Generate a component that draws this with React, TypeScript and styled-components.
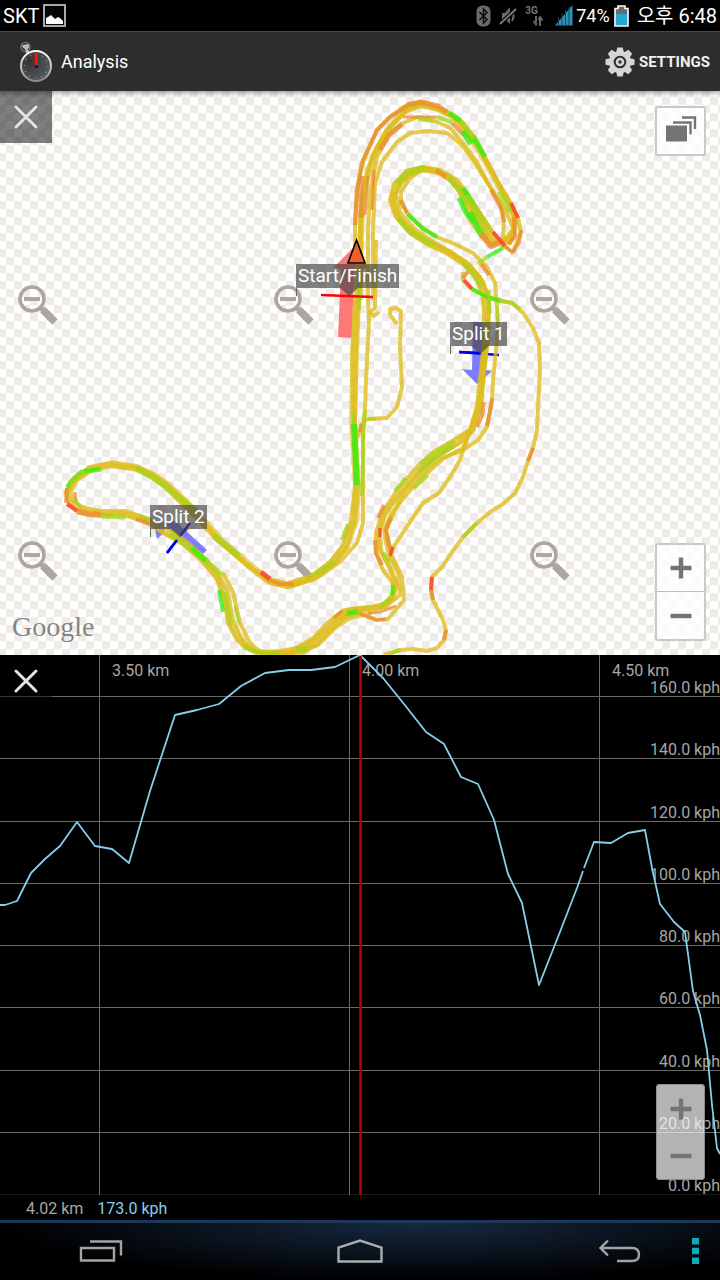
import React from "react";
import styled, { createGlobalStyle } from "styled-components";

const GlobalStyle = createGlobalStyle`
  *, *::before, *::after { box-sizing: border-box; }
  body { margin: 0; background: #000; font-family: Roboto, "Noto Sans CJK KR", sans-serif; }
  button { font: inherit; color: inherit; border: 0; padding: 0; background: none; cursor: pointer; }
  svg { display: block; }
`;

const Screen = styled.div`
  display: flex;
  flex-direction: column;
  min-height: 100vh;
  background: #000;
  overflow: hidden;
`;

const StatusBar = styled.div`
  display: flex;
  align-items: center;
  justify-content: space-between;
  height: 31px;
  padding: 0 3px;
  color: #fff;
  font-size: 20px;
  line-height: 30px;
`;

const StatusGroup = styled.div<{ $gap: number }>`
  display: flex;
  align-items: center;
  gap: ${(p) => p.$gap}px;
  white-space: nowrap;
`;

const Percent = styled.span`
  font-size: 18px;
  margin-right: 1px;
`;

const ActionBar = styled.header`
  position: relative;
  z-index: 2;
  display: flex;
  align-items: center;
  justify-content: space-between;
  height: 60px;
  padding: 0 10px 0 18px;
  background: #2d2d2d;
  border-top: 1px solid #484848;
  box-shadow: 0 1px 6px rgba(0, 0, 0, 0.5);
  color: #fff;
`;

const Brand = styled.div`
  display: flex;
  align-items: center;
  gap: 7px;
`;

const Title = styled.h1`
  margin: 0;
  font-size: 18px;
  line-height: 24px;
  font-weight: 400;
`;

const SettingsButton = styled.button`
  display: flex;
  align-items: center;
  gap: 4px;
  font-size: 15px;
  line-height: 24px;
  font-weight: 700;
  color: #f0f0f0;
`;

const MapPanel = styled.section`
  position: relative;
  aspect-ratio: 720 / 564;
  overflow: hidden;
  background: repeating-conic-gradient(#fff 0 25%, #efebe6 0 50%) 6px 6px / 16px 16px;
`;

const Canvas = styled.svg`
  position: absolute;
  inset: 0;
  width: 100%;
  height: 100%;
`;

const CloseButton = styled.button<{ $fill: string }>`
  position: absolute;
  top: 0;
  left: 0;
  display: grid;
  place-items: center;
  width: 52px;
  height: 52px;
  background: ${(p) => p.$fill};
`;

const LayersButton = styled.button`
  position: absolute;
  top: 15px;
  right: 14px;
  display: grid;
  place-items: center;
  width: 51px;
  height: 50px;
  border: 2px solid #c9c9c9;
  border-radius: 3px;
  background: rgba(255, 255, 255, 0.8);
`;

const ZoomStack = styled.div<{ $dim?: boolean }>`
  position: absolute;
  right: ${(p) => (p.$dim ? 15 : 14)}px;
  bottom: ${(p) => (p.$dim ? 15 : 14)}px;
  display: flex;
  flex-direction: column;
  width: ${(p) => (p.$dim ? 49 : 51)}px;
  border: ${(p) => (p.$dim ? "1px solid #8d8d8d" : "2px solid #c9c9c9")};
  border-radius: 3px;
  background: rgba(255, 255, 255, ${(p) => (p.$dim ? 0.7 : 0.8)});
`;

const ZoomButton = styled.button<{ $divider?: boolean }>`
  display: grid;
  place-items: center;
  height: 47px;
  ${(p) => p.$divider && "border-bottom: 1px solid #bdbdbd;"}
`;

const Pin = styled.span<{ $x: number; $y: number }>`
  position: absolute;
  left: ${(p) => (p.$x / 720) * 100}%;
  top: ${(p) => (p.$y / 564) * 100}%;
  padding: 0 2px;
  font-size: 19px;
  line-height: 24px;
  color: #fff;
  background: rgba(70, 70, 70, 0.68);
  white-space: nowrap;
`;

const Attribution = styled.span`
  position: absolute;
  left: 12px;
  bottom: 12px;
  font-family: "Liberation Serif", serif;
  font-size: 28px;
  line-height: 32px;
  color: #858585;
`;

const ChartPanel = styled.section`
  position: relative;
  aspect-ratio: 720 / 540;
  overflow: hidden;
  font-size: 16px;
  line-height: 20px;
  color: #a6a6a6;
`;

const SpeedRows = styled.div`
  display: grid;
  grid-template-rows: 42fr repeat(8, 62fr);
  height: 100%;
  text-align: right;
`;

const SpeedRow = styled.div`
  display: flex;
  align-items: flex-end;
  justify-content: flex-end;
  min-height: 0;
  line-height: 16px;
  border-bottom: 1px solid #6a6a6a;
  &:last-child { border-bottom-color: #1c1c1c; }
`;

const DistanceColumns = styled.div`
  position: absolute;
  inset: 0;
  display: grid;
  grid-template-columns: 100fr 250fr 250fr 120fr;
`;

const DistanceColumn = styled.div`
  padding: 6px 0 0 12px;
  white-space: nowrap;
  &:not(:last-child) { border-right: 1px solid #6a6a6a; }
`;

const Readout = styled.div`
  display: flex;
  gap: 14px;
  height: 25px;
  padding: 2px 26px;
  font-size: 16px;
  line-height: 24px;
  color: #a6a6a6;
`;

const Speed = styled.span`
  color: #87ceeb;
`;

const NavBar = styled.nav`
  display: grid;
  grid-template-columns: 202fr 316fr 202fr;
  height: 60px;
  padding-bottom: 2px;
  border-top: 3px solid #1b3759;
  background: radial-gradient(ellipse 58% 58px at 58% 0, #17293f 0%, #0b1420 50%, #000 100%);
`;

const NavButton = styled.button`
  display: grid;
  place-items: center;
`;

const NavEnd = styled.div`
  display: flex;
  justify-content: flex-end;
  gap: 51px;
  padding-right: 21px;
`;

type Pt = [number, number];
const line = (s: string) => "M" + s.trim().split(/\s+/).join("L");

const Y = "#debd1e";
const L = "#a3d41c";
const G = "#2cf010";
const O = "#ea8a30";
const R = "#ff3030";

/* The racing line shared by most laps, where the strands merge into a band. */
const bands: [number, string][] = [
  [8, "357,300 355,353 353,420 357,487 355,520 346,546 333,562 313,578 287,585 268,580 250,566 220,540 204,522 187,504 167,485 152,475 137,468 110,464"],
  [5, "110,464 90,468 74,480 67,492 70,503 82,510 100,513 123,513 147,520 163,531 183,543 203,560"],
  [6, "203,560 218,578 225,600 231,625 243,645 258,653 290,652 313,641 328,627 343,612 360,609 380,607"],
  [6, "360,300 361,230 364,190 374,155 387,131 405,109 421,103 437,108 453,117 464,129 480,152 497,183 511,207 516,224 511,238 500,243"],
  [7, "488,238 474,216 462,192 449,177 436,171 422,169 407,174 395,187 392,201 398,217 410,231 428,243 449,253 465,264 478,277 485,293 487,320 485,350 482,380 479,407 472,430 456,444"],
  [5, "456,444 436,456 420,469 402,489 386,511 379,530"],
  [5, "379,530 381,551 391,570 396,586 392,600 380,607"],
];

/* Recorded laps, one poly-line per pass over the circuit. */
const laps: string[] = [
  "355,260 355,225 357,190 363,162 377,130 390,117 407,105 421,102 437,107 452,114 463,123 475,138 485,157 497,180 509,200 518,218 521,232 513,252 503,246 493,233 480,213 467,193 457,180 440,170 422,167 407,171 394,184 390,200 396,217 409,232 427,244 447,253 463,263 475,277 482,293 484,310 484,340 480,380 477,407 470,430 452,441 433,452 417,467 397,490 382,513 376,533 376,553 383,570 392,582 394,592 386,603 372,607 350,609 342,611 327,623 313,638 297,648 275,652 253,651 237,640 228,623 224,597 217,579 203,562 183,544 163,533 147,522 123,515 100,515 80,513 69,504 66,492 73,479 90,467 110,463 137,467 153,474 168,485 187,503 204,522 220,540 250,567 270,583 287,587 313,579 333,565 347,547 355,520 358,487 354,440 353,420 352,353 356,287 358,250",
  "361,260 361,230 362,203 367,170 377,147 390,127 407,110 422,105 437,109 453,117 464,127 476,144 487,162 503,192 514,213 513,230 503,241 492,245 482,237 470,220 460,193 450,178 437,172 422,169 409,175 398,187 393,200 399,217 411,230 428,241 449,251 466,262 480,277 487,293 489,310 488,340 483,380 481,407 473,430 458,444 436,457 420,471 400,494 385,515 379,533 380,550 390,568 397,585 391,600 380,608 358,611 343,615 328,628 314,641 298,653 270,656 250,649 240,636 232,616 228,592 220,577 207,560 187,542 168,529 149,519 125,511 100,511 82,507 73,501 71,491 77,480 92,470 112,466 137,469 151,477 165,487 183,505 200,522 218,541 247,565 270,580 287,584 311,576 330,562 343,545 351,520 355,487 356,440 355,420 356,353 359,287 361,240",
  "368,300 368,230 370,193 377,157 388,135 403,123 418,117 433,120 450,128 463,143 477,162 487,182 500,203 504,220 503,238 494,243 486,235 475,217 466,200 453,183 438,171 424,168 410,178 401,192 401,203 410,217 423,228 437,237 457,245 473,253 487,267 495,283 497,307 498,330 493,380 492,400 487,427 478,440 463,450 440,459 424,472 404,492 392,517 386,530 391,553 402,577 404,600 388,619 377,620 358,613 344,618 330,631 316,645 300,655",
  "373,300 373,230 375,183 382,162 397,142 410,133 428,131 447,133 462,145 475,163 489,185 505,210 514,230 510,243 497,240 486,222 474,205 462,190",
  "359,300 360,215 365,185 373,155 386,131 404,113 420,106 436,109 452,116 466,130 480,150 494,176 508,202 516,222 509,238 496,242 486,230 473,210 464,192 450,178 433,170 415,171 402,180 396,194 400,212 414,228 432,241 452,253 470,265 483,282 489,300 487,330 484,365 481,395 473,425 463,448 444,458 424,476 407,494 391,514 384,531 388,552 398,574 400,595 385,607 358,609 341,619",
  "368,300 369,320 366,380 365,410 363,437 363,497 363,523 357,543 340,562 318,577 290,587",
  "376,240 375,308 370,312 374,316 379,312",
  "397,324 390,315 390,309 396,308 401,311 400,347 402,387 397,407 387,418 367,419 361,425 358,437",
  "223,573 233,592 240,623 250,643 262,653 290,653 318,645 335,628 350,618 372,613",
  "463,272 463,280 472,289 487,297 512,303 523,313 533,328 539,343 540,370 538,407 537,430 533,448 528,461 523,477 515,493 503,504 490,512 477,523 463,537 452,552 442,567 432,577 431,590 433,600 443,620 446,630 444,640 437,648 427,651 413,649 400,650 384,655",
  "470,430 460,460 450,477 439,493 423,503 410,522 394,546 390,557",
];

/* Acceleration (green) and braking (orange, red) stretches painted over the laps. */
const stretches: [string, number, string][] = [
  [O, 4, "355,225 357,190 362,162"],
  [O, 5, "361,218 361,190 362,176"],
  [O, 3, "365,215 368,176"],
  [O, 3, "372,210 374,170"],
  [O, 4, "362,162 377,130 390,117 407,106"],
  [O, 5, "380,150 389,135 402,124"],
  [O, 5, "407,105 421,102 438,106 447,112"],
  [O, 3, "403,117 437,117"],
  [O, 4, "452,123 466,137"],
  [L, 4, "418,119 433,121"],
  [L, 4, "437,117 452,122"],
  [G, 5, "449,113 461,121"],
  [G, 6, "463,131 471,144"],
  [G, 5, "473,136 485,157"],
  [L, 4, "461,121 474,138"],
  [O, 4, "491,190 501,208 504,222"],
  [L, 5, "499,192 510,212"],
  [R, 4, "511,203 518,218"],
  [O, 4, "521,230 519,242 513,252"],
  [O, 4, "514,217 515,236 509,244"],
  [L, 5, "449,178 461,192 468,205"],
  [G, 5, "459,198 466,213 474,222"],
  [G, 5, "463,188 474,205"],
  [L, 5, "474,205 481,218 488,229"],
  [G, 6, "470,212 481,234"],
  [L, 5, "467,195 480,217"],
  [O, 6, "481,234 491,246 500,243"],
  [R, 4, "493,232 505,246"],
  [O, 3, "505,246 513,253"],
  [G, 4, "503,248 487,257"],
  [L, 4, "487,257 478,264"],
  [O, 4, "468,272 463,278"],
  [R, 4, "464,280 472,289"],
  [G, 4, "472,289 487,297 500,301"],
  [L, 4, "500,301 512,303 520,309"],
  [L, 6, "397,184 407,172 425,168"],
  [O, 4, "436,170 446,177"],
  [O, 4, "401,200 407,213"],
  [G, 4, "408,214 423,229 437,237"],
  [L, 5, "398,218 411,233 434,245"],
  [L, 4, "462,262 474,275 481,287"],
  [O, 4, "481,264 489,275"],
  [L, 3, "489,290 490,314"],
  [L, 3, "497,306 498,330"],
  [L, 3, "488,320 486,352"],
  [O, 4, "484,402 482,416 477,427"],
  [O, 4, "492,398 490,412 487,426"],
  [L, 4, "360,280 359,310"],
  [L, 4, "354,414 354,430"],
  [G, 6, "354,424 357,485"],
  [L, 4, "365,410 363,430 363,460 362,496"],
  [O, 3, "361,424 360,432"],
  [L, 3, "368,419 376,419"],
  [L, 4, "455,441 436,452 420,464"],
  [L, 5, "453,446 436,457 418,472"],
  [L, 4, "428,475 414,488"],
  [L, 4, "406,478 395,491"],
  [O, 4, "384,505 378,518"],
  [O, 4, "391,517 386,530 391,553"],
  [R, 3, "380,528 380,537"],
  [O, 4, "375,540 376,553 382,565"],
  [R, 3, "393,547 390,556"],
  [L, 4, "383,553 390,562"],
  [G, 4, "393,585 392,595"],
  [L, 4, "390,598 381,606"],
  [O, 3, "396,606 380,612 368,613"],
  [O, 3, "359,613 376,620 386,619"],
  [O, 3, "334,618 342,611"],
  [G, 5, "347,613 358,612"],
  [L, 6, "297,650 307,649"],
  [L, 4, "348,524 342,540"],
  [L, 4, "310,577 335,562"],
  [R, 5, "261,572 270,579"],
  [O, 4, "270,580 280,584 294,584"],
  [L, 6, "214,536 239,556"],
  [L, 6, "136,468 153,477 167,488 196,511"],
  [G, 4, "67,487 73,479 82,471"],
  [L, 5, "69,484 82,472 102,469"],
  [G, 4, "84,471 100,469"],
  [O, 4, "67,488 66,503"],
  [O, 3, "75,492 76,502"],
  [L, 3, "75,499 80,507"],
  [R, 4, "67,504 77,511"],
  [O, 6, "77,511 89,514 101,515"],
  [L, 5, "101,516 125,517"],
  [L, 4, "140,516 152,521"],
  [O, 4, "136,519 150,524"],
  [L, 5, "170,533 188,546 204,560"],
  [G, 5, "192,548 206,561"],
  [L, 5, "206,561 222,575"],
  [G, 4, "219,590 223,612"],
  [L, 4, "225,592 231,625"],
  [L, 3, "235,606 239,623"],
  [L, 4, "243,647 258,652 280,654"],
  [L, 4, "391,653 400,650"],
  [O, 4, "533,448 528,461"],
  [L, 4, "477,523 463,537"],
  [R, 4, "432,577 431,590"],
  [O, 4, "431,590 433,600"],
  [O, 4, "446,630 444,640"],
];

const lensCentres: Pt[] = [
  [32, 299], [288, 299], [544, 299],
  [32, 555], [288, 555], [544, 555],
];

const speedTrace =
  "0,905 5,905 17,901 31,873 45,859 60,846 77,822 95,846 112,849 129,863 150,791 175,715 197,710 219,704 241,686 265,673 289,670 311,670 335,667 360,655 383,678 404,704 426,732 444,744 461,777 478,784 494,820 508,874 522,903 539,985 558,937 577,888 583,871";
const speedTraceEnd =
  "584,868 594,842 611,843 628,833 645,830 652,868 660,904 674,922 685,932 693,991 700,1015 707,1050 712,1105 717,1148 720,1154";

const Cross = () => (
  <svg width="24" height="24" viewBox="0 0 24 24" aria-hidden="true">
    <path d="M2 2L22 22M22 2L2 22" stroke="#e4e4e4" strokeWidth="3" strokeLinecap="round" />
  </svg>
);

const Plus = () => (
  <svg width="22" height="22" viewBox="0 0 22 22" aria-hidden="true">
    <path d="M0.5 11H21.5M11 0.5V21.5" stroke="#747474" strokeWidth="4.4" />
  </svg>
);

const Minus = () => (
  <svg width="22" height="22" viewBox="0 0 22 22" aria-hidden="true">
    <path d="M0.5 11H21.5" stroke="#747474" strokeWidth="4.4" />
  </svg>
);

const PictureIcon = () => (
  <svg width="23" height="23" viewBox="0 0 23 23" aria-hidden="true">
    <rect x="1" y="1" width="21" height="21" fill="#050505" stroke="#aaa" strokeWidth="2" />
    <path d="M3 20V14L5 13L8 11L12 15L15 13L17 14L20 17V20Z" fill="#fff" />
  </svg>
);

const BluetoothIcon = () => (
  <svg width="15" height="22" viewBox="0 0 15 22" aria-hidden="true">
    <rect x="0.5" y="0.5" width="14" height="21" rx="6" fill="#6a6a6a" />
    <path d="M3.5 7L11 14.5L7.5 18V4L11 7.5L3.5 15" fill="none" stroke="#0c0c0c" strokeWidth="1.5" />
  </svg>
);

const MuteIcon = () => (
  <svg width="18" height="20" viewBox="0 0 18 20" aria-hidden="true">
    <path d="M3 7H6L11 1V18L6 13H3Z" fill="#6a6a6a" />
    <path d="M13 5Q16 9 13 15" fill="none" stroke="#6a6a6a" strokeWidth="2" />
    <path d="M1 18L17 3" stroke="#000" strokeWidth="4" />
    <path d="M1 18L17 3" stroke="#808080" strokeWidth="1.8" />
  </svg>
);

const Network = styled.span`
  display: grid;
  justify-items: end;
  width: 18px;
  margin-right: 4px;
  color: #777;
  font-size: 10px;
  line-height: 10px;
  font-weight: 700;
`;

const NetworkName = styled.span`
  justify-self: start;
`;

const ArrowsIcon = () => (
  <svg width="10" height="10" viewBox="0 0 10 10" aria-hidden="true">
    <path d="M3 0V6M0.5 5L3 8.5L4 7M7 10V3M5.5 4L7 1L9.5 4.5" stroke="#666" strokeWidth="2" fill="none" />
  </svg>
);

const SignalIcon = () => (
  <svg width="18" height="21" viewBox="0 0 18 21" aria-hidden="true">
    <path d="M0 20.500L17.500 0V20.500Z" fill="#2f8fb5" />
    <path d="M3.500 12V20M7 8V20M10.500 5V20M14 2V20" stroke="#174a60" strokeWidth="1" />
  </svg>
);

const BatteryIcon = () => (
  <svg width="15" height="22" viewBox="0 0 15 22" aria-hidden="true">
    <path d="M1 3.500H4V1H11V3.500H14V21H1Z" fill="#6b6b6b" stroke="#fff" strokeWidth="1.600" />
    <rect x="2" y="9" width="11" height="11" fill="#27a8d3" />
  </svg>
);

const StopwatchIcon = () => (
  <svg width="36" height="42" viewBox="0 0 36 42" aria-hidden="true">
    <defs>
      <radialGradient id="dial" cx="0.3" cy="0.35" r="0.8">
        <stop offset="0" stopColor="#33333a" />
        <stop offset="1" stopColor="#5a5c5e" />
      </radialGradient>
      <linearGradient id="rim" x1="0" y1="0" x2="0" y2="1">
        <stop offset="0" stopColor="#fff" />
        <stop offset="1" stopColor="#8c8c8c" />
      </linearGradient>
    </defs>
    <circle cx="7.500" cy="6" r="4.600" fill="none" stroke="#777" strokeWidth="1.400" />
    <path d="M4 4L11 3L11 7L9.500 8L12 12L8.500 13L7 8L5 7Z" fill="#bbb" />
    <circle cx="18" cy="25" r="15" fill="url(#dial)" stroke="url(#rim)" strokeWidth="2" />
    <path d="M18 25L12 15L18 12.500Z" fill="#8e2210" opacity="0.7" />
    <circle cx="18" cy="25" r="11.800" fill="none" stroke="#aaa" strokeWidth="1.200" strokeDasharray="0.800 5.380" />
    <path d="M18.300 25V12.500" stroke="#ff1a08" strokeWidth="2.400" />
    <circle cx="18.500" cy="25.500" r="1.600" fill="#17171a" />
  </svg>
);

const gearTeeth = [0, 45, 90, 135, 180, 225, 270, 315];
const GearIcon = () => (
  <svg width="30" height="30" viewBox="0 0 30 30" aria-hidden="true">
    <g fill="#d6d6d6">
      {gearTeeth.map((a) => (
        <path key={a} d="M11 6L12.300 0.500H17.700L19 6Z" transform={`rotate(${a} 15 15)`} />
      ))}
    </g>
    <circle cx="15" cy="15" r="8.600" fill="none" stroke="#d6d6d6" strokeWidth="4.600" />
    <circle cx="15" cy="15" r="3" fill="none" stroke="#d6d6d6" strokeWidth="2.600" />
  </svg>
);

const LayersIcon = () => (
  <svg width="32" height="30" viewBox="0 0 32 30" aria-hidden="true">
    <rect x="1" y="9.500" width="21" height="16" fill="#747474" />
    <path d="M8 6.500H25.500V18.500M17 1.500H30V13" fill="none" stroke="#747474" strokeWidth="2.400" />
  </svg>
);

const TrackMap = () => (
  <Canvas viewBox="0 91 720 564" role="img" aria-label="Recorded laps">
    <g fill="none" stroke="#aca79d">
      {lensCentres.map(([x, y]) => (
        <g key={`${x}-${y}`}>
          <circle cx={x} cy={y} r="12" strokeWidth="3.600" />
          <path d={`M${x - 8} ${y}h16`} strokeWidth="4" />
          <path d={`M${x + 8} ${y + 8}l5 5`} strokeWidth="5" />
          <path d={`M${x + 11} ${y + 11}l12 12`} strokeWidth="7.500" />
        </g>
      ))}
    </g>
    <path d="M338 337L341 270L334 267L352 249L369 268L354 270L352 338Z" fill="#ff7878" />
    <path d="M473 322L487 322L485 370L492 371L477 384L462 369L472 370Z" fill="#7d7dff" />
    <path d="M207 550L203 554L165 527L164 533L157 539L154 524L175 521Z" fill="#7d7dff" />
    <path d="M459 352L499 355M167 553L190 523" stroke="#0000f0" strokeWidth="2.500" />
    <g fill="none" stroke={Y} strokeLinejoin="round" strokeOpacity="0.6">
      {bands.map(([w, s]) => (
        <path key={s} d={line(s)} strokeWidth={w} />
      ))}
    </g>
    <g fill="none" stroke={Y} strokeWidth="4" strokeLinejoin="round" strokeOpacity="0.78">
      {laps.map((s) => (
        <path key={s.slice(0, 40)} d={line(s)} />
      ))}
    </g>
    <g fill="none" strokeLinejoin="round" strokeOpacity="0.75">
      {stretches.map(([c, w, s]) => (
        <path key={s} d={line(s)} stroke={c} strokeWidth={w} />
      ))}
    </g>
    <path d="M321 295L373 297" stroke="#f00" strokeWidth="2.500" />
    <path d="M459 352L480 353M167 553L177 540" stroke="#0000f0" strokeWidth="2.500" />
    <g fill="#464646" fillOpacity="0.68">
      <path d="M340 288H358L349 296Z" />
      <path d="M471 346H489L480 354Z" />
      <path d="M171 529H189L180 537Z" />
    </g>
    <path d="M296.500 288V296M450.500 346V354M150.500 529V537" stroke="#666" strokeWidth="1" />
    <path d="M356.500 240L365 263H348Z" fill="#f0602c" stroke="#000" strokeWidth="1.600" />
  </Canvas>
);

const speeds = ["160.0", "140.0", "120.0", "100.0", "80.0", "60.0", "40.0", "20.0", "0.0"];
const distances = ["", "3.50 km", "4.00 km", "4.50 km"];

export default function App() {
  return (
    <Screen>
      <GlobalStyle />
      <StatusBar>
        <StatusGroup $gap={4}>
          <span>SKT</span>
          <PictureIcon />
        </StatusGroup>
        <StatusGroup $gap={8}>
          <BluetoothIcon />
          <MuteIcon />
          <Network>
            <NetworkName>3G</NetworkName>
            <ArrowsIcon />
          </Network>
          <StatusGroup $gap={3}>
            <SignalIcon />
            <Percent>74%</Percent>
            <BatteryIcon />
          </StatusGroup>
          <span>오후 6:48</span>
        </StatusGroup>
      </StatusBar>

      <ActionBar>
        <Brand>
          <StopwatchIcon />
          <Title>Analysis</Title>
        </Brand>
        <SettingsButton type="button">
          <GearIcon />
          SETTINGS
        </SettingsButton>
      </ActionBar>

      <MapPanel>
        <TrackMap />
        <Pin $x={296} $y={173}>Start/Finish</Pin>
        <Pin $x={450} $y={231}>Split 1</Pin>
        <Pin $x={150} $y={414}>Split 2</Pin>
        <Attribution>Google</Attribution>
        <CloseButton type="button" aria-label="Close map" $fill="rgba(0, 0, 0, 0.5)">
          <Cross />
        </CloseButton>
        <LayersButton type="button" aria-label="Map layers">
          <LayersIcon />
        </LayersButton>
        <ZoomStack>
          <ZoomButton type="button" aria-label="Zoom map in" $divider>
            <Plus />
          </ZoomButton>
          <ZoomButton type="button" aria-label="Zoom map out">
            <Minus />
          </ZoomButton>
        </ZoomStack>
      </MapPanel>

      <ChartPanel>
        <SpeedRows>
          {speeds.map((s) => (
            <SpeedRow key={s}>{s} kph</SpeedRow>
          ))}
        </SpeedRows>
        <DistanceColumns>
          {distances.map((d) => (
            <DistanceColumn key={d}>{d}</DistanceColumn>
          ))}
        </DistanceColumns>
        <Canvas viewBox="0 655 720 540" role="img" aria-label="Speed over distance">
          <g fill="none" stroke="#87ceeb" strokeWidth="1.800" strokeLinejoin="round">
            <path d={line(speedTrace)} />
            <path d={line(speedTraceEnd)} />
          </g>
          <path d="M360.500 656V1195" stroke="#b40000" strokeWidth="2.600" />
        </Canvas>
        <CloseButton type="button" aria-label="Close chart" $fill="rgba(0, 0, 0, 0.5)">
          <Cross />
        </CloseButton>
        <ZoomStack $dim>
          <ZoomButton type="button" aria-label="Zoom chart in">
            <Plus />
          </ZoomButton>
          <ZoomButton type="button" aria-label="Zoom chart out">
            <Minus />
          </ZoomButton>
        </ZoomStack>
      </ChartPanel>

      <Readout>
        <span>4.02 km</span>
        <Speed>173.0 kph</Speed>
      </Readout>

      <NavBar>
        <NavButton type="button" aria-label="Recent apps">
          <svg width="44" height="24" viewBox="0 0 44 24" aria-hidden="true">
            <path d="M2 9H35V21.500H2ZM11 2.500H42V16.500" fill="none" stroke="#a3a3a3" strokeWidth="2.400" />
          </svg>
        </NavButton>
        <NavButton type="button" aria-label="Home">
          <svg width="46" height="24" viewBox="0 0 46 24" aria-hidden="true">
            <path d="M1.500 22.500V8.500L23 1.500L44.500 8.500V22.500Z" fill="none" stroke="#a9adb3" strokeWidth="2.400" />
          </svg>
        </NavButton>
        <NavEnd>
          <NavButton type="button" aria-label="Back">
            <svg width="42" height="24" viewBox="0 0 42 24" aria-hidden="true">
              <path d="M9 1.500L1.500 9L9 16.500M1.500 9H33Q40 9 40 15.500Q40 22 33 22H18" fill="none" stroke="#a3a3a3" strokeWidth="2.400" />
            </svg>
          </NavButton>
          <NavButton type="button" aria-label="Menu">
            <svg width="7" height="26" viewBox="0 0 7 26" aria-hidden="true">
              <path d="M0 0H7V6.500H0ZM0 9.700H7V16.200H0ZM0 19.500H7V26H0Z" fill="#0fa9b8" />
            </svg>
          </NavButton>
        </NavEnd>
      </NavBar>
    </Screen>
  );
}
